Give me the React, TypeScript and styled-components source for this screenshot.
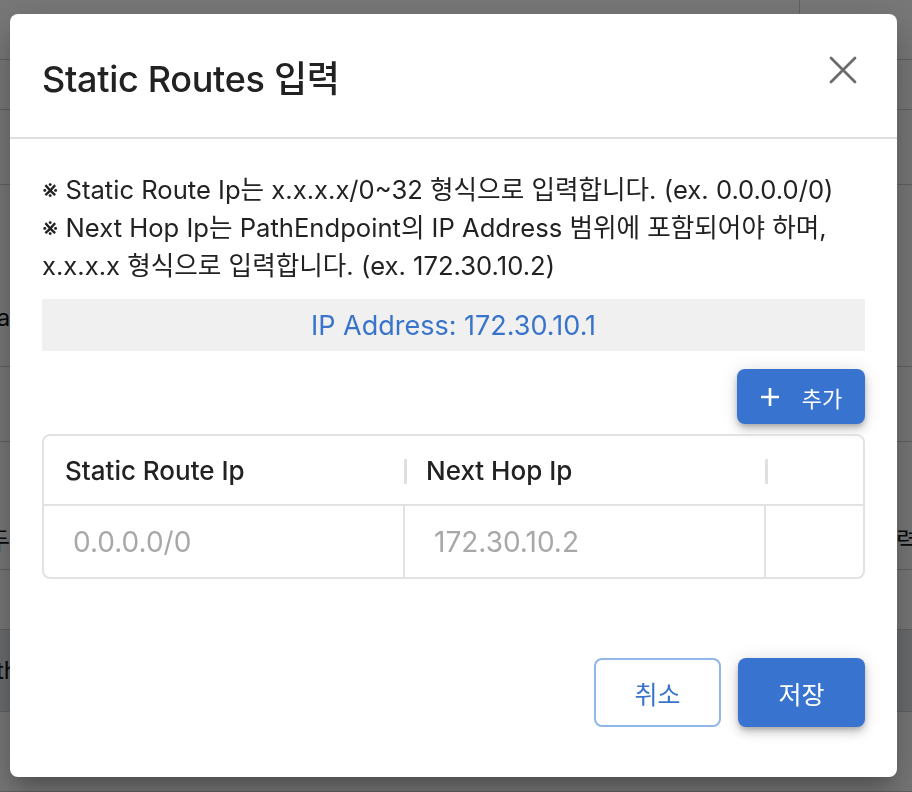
import React from 'react';
import styled, { createGlobalStyle } from 'styled-components';

const GlobalStyle = createGlobalStyle`
  html, body { margin: 0; padding: 0; width: 100%; height: 100%; overflow: hidden; }
  body { font-family: Inter, "Noto Sans CJK KR", sans-serif; background: #fff; color: #222; }
  * { box-sizing: border-box; }
`;

const Page = styled.div`
  width: 912px;
  height: 792px;
  display: flex;
  flex-direction: column;
  background: #fff;
  font-size: 21px;
  color: #222;
`;

const BgRow = styled.div<{ $h: number; $shade?: boolean; $pb?: number }>`
  height: ${p => p.$h}px;
  flex: none;
  border-bottom: 1px solid #cfcfcf;
  background: ${p => (p.$shade ? '#e4e7ec' : '#fff')};
  display: flex;
  align-items: ${p => (p.$pb !== undefined ? 'flex-end' : 'center')};
  justify-content: space-between;
  padding-bottom: ${p => p.$pb ?? 0}px;
`;

const BgCell = styled.div<{ $w: number; $line?: boolean }>`
  width: ${p => p.$w}px;
  height: 100%;
  border-right: ${p => (p.$line ? '1px solid #cfcfcf' : 'none')};
`;

const BgText = styled.span<{ $shift?: number }>`
  margin-left: ${p => p.$shift ?? 0}px;
  margin-right: ${p => p.$shift ?? 0}px;
  font-size: 24px;
  line-height: 28px;
  color: #111;
`;

const Overlay = styled.div`
  position: fixed;
  inset: 0;
  background: rgba(0, 0, 0, 0.53);
  display: flex;
  align-items: flex-start;
  padding: 14px 15px 15px 10px;
`;

const Modal = styled.div`
  width: 887px;
  height: 763px;
  background: #fff;
  border-radius: 8px;
  display: flex;
  flex-direction: column;
  box-shadow: 0 11px 15px -7px rgba(0, 0, 0, 0.2), 0 24px 38px 3px rgba(0, 0, 0, 0.14),
    0 9px 46px 8px rgba(0, 0, 0, 0.12);
  overflow: hidden;
`;

const Header = styled.div`
  height: 125px;
  flex: none;
  display: flex;
  align-items: center;
  justify-content: space-between;
  padding: 0 40px 0 32px;
  border-bottom: 2px solid #e0e0e0;
`;

const Title = styled.h2`
  margin: 0;
  font-size: 36px;
  font-weight: 500;
  color: #222;
  letter-spacing: -0.3px;
`;

const CloseButton = styled.button`
  width: 28px;
  height: 28px;
  padding: 0;
  margin-bottom: 12px;
  border: none;
  background: none;
  display: flex;
  align-items: center;
  justify-content: center;
  cursor: pointer;
`;

const Body = styled.div`
  flex: 1;
  display: flex;
  flex-direction: column;
  padding: 32px 32px 50px;
`;

const Notice = styled.p`
  margin: 0;
  font-size: 25.6px;
  line-height: 38px;
  color: #222;
  white-space: nowrap;
`;

const IpBox = styled.div`
  margin-top: 14px;
  height: 52px;
  background: #f0f0f0;
  color: #3874cb;
  display: flex;
  align-items: center;
  justify-content: center;
  font-size: 27px;
`;

const Toolbar = styled.div`
  margin-top: 18px;
  display: flex;
  justify-content: flex-end;
`;

const PrimaryButton = styled.button<{ $w: number; $h: number; $fs: number }>`
  width: ${p => p.$w}px;
  height: ${p => p.$h}px;
  border: none;
  border-radius: 8px;
  background: #3874cf;
  color: #fff;
  font-family: inherit;
  font-size: ${p => p.$fs}px;
  display: flex;
  align-items: center;
  justify-content: center;
  gap: 22px;
  box-shadow: 0 3px 5px -1px rgba(0, 0, 0, 0.2), 0 6px 10px 0 rgba(0, 0, 0, 0.14),
    0 1px 18px 0 rgba(0, 0, 0, 0.12);
  cursor: pointer;
`;

const OutlineButton = styled.button<{ $w: number; $h: number }>`
  width: ${p => p.$w}px;
  height: ${p => p.$h}px;
  border: 2px solid #93b6e8;
  border-radius: 8px;
  background: #fff;
  color: #3874cb;
  font-family: inherit;
  font-size: 25px;
  cursor: pointer;
`;

const Table = styled.div`
  margin-top: 10px;
  border: 2px solid #e2e2e2;
  border-radius: 8px;
  display: grid;
  grid-template-columns: 361px 361px 1fr;
  overflow: hidden;
`;

const HeadCell = styled.div<{ $bar?: boolean }>`
  position: relative;
  height: 70px;
  border-bottom: 2px solid #e2e2e2;
  display: flex;
  align-items: center;
  padding-left: 21px;
  font-size: 26px;
  font-weight: 500;
  color: #222;
  &::after {
    content: '';
    display: ${p => (p.$bar ? 'block' : 'none')};
    position: absolute;
    right: -2px;
    top: 23px;
    width: 3px;
    height: 25px;
    background: #e0e0e0;
  }
`;

const BodyCell = styled.div<{ $line?: boolean }>`
  height: 71px;
  border-right: ${p => (p.$line ? '2px solid #e2e2e2' : 'none')};
  display: flex;
  align-items: center;
  padding-left: 29px;
  font-size: 28px;
`;

const Placeholder = styled.span`
  color: #a8a8a8;
`;

const Footer = styled.div`
  margin-top: auto;
  display: flex;
  justify-content: flex-end;
  gap: 17px;
`;

const CloseIcon = () => (
  <svg width="28" height="28" viewBox="0 0 28 28">
    <path d="M2 2 L26 26 M26 2 L2 26" stroke="#6b6b6b" strokeWidth="2.8" strokeLinecap="round" />
  </svg>
);

const PlusIcon = () => (
  <svg width="20" height="20" viewBox="0 0 20 20">
    <path d="M10 1 V19 M1 10 H19" stroke="#fff" strokeWidth="2.6" />
  </svg>
);

export default function App() {
  return (
    <>
      <GlobalStyle />
      <Page>
        <BgRow $h={60}>
          <BgCell $w={800} $line />
          <BgCell $w={112} />
        </BgRow>
        <BgRow $h={50} />
        <BgRow $h={75} />
        <BgRow $h={182} $pb={34}>
          <BgText $shift={-9}>la</BgText>
        </BgRow>
        <BgRow $h={75} />
        <BgRow $h={128} $pb={14}>
          <BgText $shift={-12}>두</BgText>
          <BgText $shift={-6}>력</BgText>
        </BgRow>
        <BgRow $h={60} />
        <BgRow $h={82} $shade>
          <BgText $shift={-4}>th</BgText>
        </BgRow>
        <BgRow $h={80} />
      </Page>
      <Overlay>
        <Modal>
          <Header>
            <Title>Static Routes 입력</Title>
            <CloseButton aria-label="close">
              <CloseIcon />
            </CloseButton>
          </Header>
          <Body>
            <Notice>
              ※ Static Route Ip는 x.x.x.x/0~32 형식으로 입력합니다. (ex. 0.0.0.0/0)
              <br />
              ※ Next Hop Ip는 PathEndpoint의 IP Address 범위에 포함되어야 하며,
              <br />
              x.x.x.x 형식으로 입력합니다. (ex. 172.30.10.2)
            </Notice>
            <IpBox>IP Address: 172.30.10.1</IpBox>
            <Toolbar>
              <PrimaryButton $w={128} $h={55} $fs={22}>
                <PlusIcon />
                <span>추가</span>
              </PrimaryButton>
            </Toolbar>
            <Table>
              <HeadCell $bar>Static Route Ip</HeadCell>
              <HeadCell $bar>Next Hop Ip</HeadCell>
              <HeadCell />
              <BodyCell $line>
                <Placeholder>0.0.0.0/0</Placeholder>
              </BodyCell>
              <BodyCell $line>
                <Placeholder>172.30.10.2</Placeholder>
              </BodyCell>
              <BodyCell />
            </Table>
            <Footer>
              <OutlineButton $w={127} $h={69}>취소</OutlineButton>
              <PrimaryButton $w={127} $h={69} $fs={25}>저장</PrimaryButton>
            </Footer>
          </Body>
        </Modal>
      </Overlay>
    </>
  );
}
